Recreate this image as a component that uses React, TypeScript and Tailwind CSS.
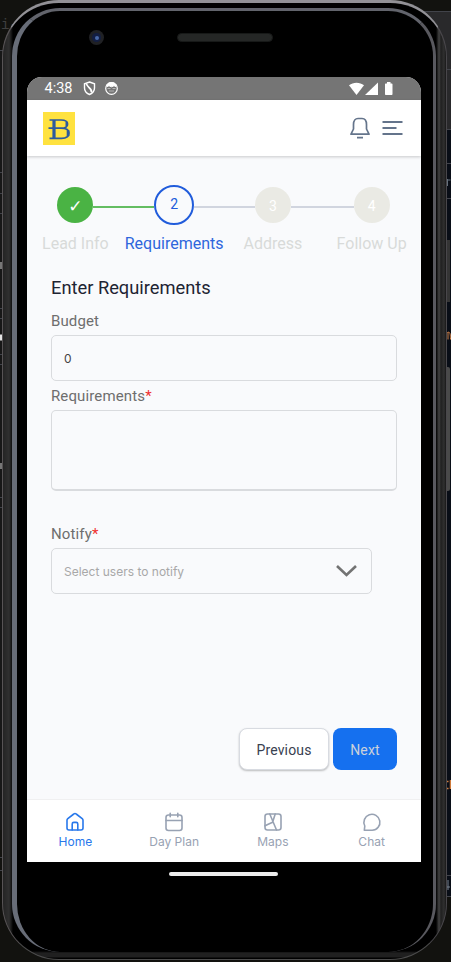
import React from "react";

const steps = [
  { label: "Lead Info", state: "done" },
  { label: "Requirements", state: "active" },
  { label: "Address", state: "todo" },
  { label: "Follow Up", state: "todo" },
];

function StatusBar() {
  return (
    <div className="flex h-[23px] shrink-0 items-center bg-[#757575] pr-[27px] pl-[17.500px] text-white">
      <span className="w-[38.500px] pt-[2px] text-[14.500px] leading-none">4:38</span>
      <svg width="13" height="15" viewBox="0 0 13 15" fill="none" stroke="currentColor" strokeWidth="1.4">
        <path d="M6.5 1 11.5 2.8V7c0 3-2 5.300-5 6.500C3.500 12.300 1.500 10 1.500 7V2.800Z" />
        <path d="M3.500 2.500C3 6 9.500 7 8.500 11.500" strokeWidth="1.800" />
      </svg>
      <svg className="ml-[8px]" width="15" height="15" viewBox="0 0 15 15" fill="none" stroke="currentColor">
        <circle cx="7.500" cy="7.500" r="5.800" strokeWidth="1.200" />
        <path d="M3 5.500V3.500C5 .8 10 .8 12 3.500V5.500L10 4.800 7.500 5.800 5 4.800Z" fill="currentColor" />
        <path d="M3.500 7.500H6.500M8.500 7.500H11.500M5 10H10" strokeWidth=".8" opacity=".6" />
      </svg>
      <svg className="ml-auto" width="45" height="16" viewBox="0 0 45 16" fill="currentColor">
        <path d="M0 4.200C4.200.8 10.800.8 15 4.200L7.500 14Z" />
        <path d="M16 14 29 1.500V14Z" />
        <path d="M36 3.500c0-.6.400-1 1-1h1V1h3.500v1.500H42.500c.6 0 1 .4 1 1V13c0 .6-.4 1-1 1H37c-.6 0-1-.4-1-1Z" />
      </svg>
    </div>
  );
}

function Header() {
  return (
    <header className="relative flex h-[56px] shrink-0 items-center bg-white pr-[18px] pl-4 text-[#64748b] shadow-[0_1px_3px_rgba(0,0,0,0.2)]">
      <svg width="32" height="33" viewBox="0 0 32 33">
        <rect width="32" height="33" fill="#ffe23f" />
        <g fill="none" stroke="#2d5a9e">
          <path d="M6.500 8H18C22.500 8 24.500 9.500 24.500 12s-2 4.200-6 4.200H5.500M18 16.200c5 0 8 1.300 8 4.800s-3 5.300-7.500 5.300H6.500" strokeWidth="1.700" />
          <path d="M11 8V26.300" strokeWidth="3.200" />
          <path d="M23.800 9.800V14M25 18.300V24" strokeWidth="2.600" />
        </g>
      </svg>
      <svg className="ml-auto" width="20" height="22" viewBox="0 0 20 22" fill="none" stroke="currentColor" strokeWidth="1.700" strokeLinejoin="round">
        <path d="M1 17.200 3.500 12V7.500C3.500 3.500 5.500 1.500 8 1.500h4c2.500 0 4.500 2 4.500 6V12L19 17.200Z" />
        <path d="M7 20.700H13" />
      </svg>
      <svg className="ml-3" width="21" height="18" viewBox="0 0 21 18" fill="none" stroke="currentColor" strokeWidth="1.900">
        <path d="M.5 3H20.500M.5 9H14.500M.5 15H20.500" />
      </svg>
    </header>
  );
}

function Stepper() {
  return (
    <div className="-ml-px grid h-[91px] w-[395px] grid-cols-4">
      {steps.map((step, i) => (
        <div key={step.label} className="flex flex-col items-center">
          <div className="flex h-10 w-full items-center">
            <div className={`mt-[3px] h-[2px] flex-1 ${i === 0 ? "bg-transparent" : i === 1 ? "bg-[#64bd62]" : "bg-[#d1d5df]"}`} />
            {step.state === "done" && (
              <div className="flex h-9 w-9 items-center justify-center rounded-full bg-[#4ab344] font-['DejaVu_Sans',sans-serif] text-[17px] text-white">
                <span className="mt-[3px]">✓</span>
              </div>
            )}
            {step.state === "active" && (
              <div className="flex h-10 w-10 items-center justify-center rounded-full border-2 border-[#215cdb] pb-[2px] text-[14px] text-[#215cdb]">
                {i + 1}
              </div>
            )}
            {step.state === "todo" && (
              <div className="flex h-9 w-9 items-center justify-center rounded-full bg-[#eaeae4] text-[14px] text-white">
                <span className="mt-[3px]">{i + 1}</span>
              </div>
            )}
            <div className={`mt-[3px] h-[2px] flex-1 ${i === 3 ? "bg-transparent" : i === 0 ? "bg-[#64bd62]" : "bg-[#d1d5df]"}`} />
          </div>
          <span className={`mt-[7px] text-[16px] leading-6 whitespace-nowrap ${step.state === "active" ? "text-[#2e66dc]" : "text-[#d8dad9]"}`}>
            {step.label}
          </span>
        </div>
      ))}
    </div>
  );
}

function Label({ children, required }: { children: string; required?: boolean }) {
  return (
    <label className="block h-5 text-[15px] leading-[21px] tracking-[0.13px] text-[#6e6e6e]">
      {children}
      {required && <span className="text-[#ef3030]">*</span>}
    </label>
  );
}

function Form() {
  return (
    <div className="flex flex-1 flex-col px-6">
      <h1 className="h-6 text-[18.300px] leading-6 text-[#1e2433]">Enter Requirements</h1>
      <div className="mt-[11px]">
        <Label>Budget</Label>
        <div className="mt-[4px] flex h-[46px] w-[346px] items-center rounded-[5px] border border-[#d9dbde] px-3 pt-px font-[Inter,sans-serif] text-[12px] text-[#444]">
          0
        </div>
      </div>
      <div className="mt-[5px]">
        <Label required>Requirements</Label>
        <div className="mt-[4px] h-[81px] w-[346px] rounded-[5px] border border-b-2 border-[#d9dbde]" />
      </div>
      <div className="mt-[33px]">
        <Label required>Notify</Label>
        <div className="mt-[4px] flex h-[46px] w-[321px] items-center justify-between rounded-[5px] border border-[#d9dbde] pr-[14px] pl-3 font-[Inter,sans-serif] text-[12px] text-[#a8a8a8]">
          <span className="pt-[2px]">Select users to notify</span>
          <svg width="21" height="12" viewBox="0 0 21 12" fill="none" stroke="#737373" strokeWidth="2.600">
            <path d="m1 1 9.500 9L20 1" />
          </svg>
        </div>
      </div>
      <div className="mt-auto mb-[29px] flex justify-end gap-1 text-[14px] tracking-[0.15px]">
        <button className="h-[42px] w-[90px] rounded-lg border border-[#d8dbe1] bg-white pt-[2px] text-[#394150] shadow-[0_1px_2px_rgba(0,0,0,0.25)]">Previous</button>
        <button className="h-[42px] w-[64px] rounded-lg bg-[#1570ef] pt-[2px] text-[#cbd1da]">Next</button>
      </div>
    </div>
  );
}

function NavIcon({ name }: { name: string }) {
  return (
    <svg width="20" height="20" viewBox="0 0 20 20" fill="none" stroke="currentColor" strokeWidth="1.600" strokeLinejoin="round" strokeLinecap="round">
      {name === "Home" && (
        <>
          <path d="M2 8.300c0-.6.300-1.200.8-1.600L8.800 2c.7-.6 1.700-.6 2.400 0l6 4.700c.5.400.8 1 .8 1.600V16c0 1.200-.8 2-2 2H4c-1.200 0-2-.8-2-2Z" />
          <path d="M7.200 18v-6c0-1 .6-1.600 1.600-1.600h2.400c1 0 1.600.6 1.600 1.600v6" />
        </>
      )}
      {name === "Day Plan" && (
        <>
          <rect x="2" y="3" width="16" height="15.500" rx="2.500" />
          <path d="M2 8.500H18M6.200 1.200V4.800M13.800 1.200V4.800" />
        </>
      )}
      {name === "Maps" && (
        <>
          <rect x="2" y="2" width="16" height="16" rx="2.500" />
          <path d="M6.800 2 13.500 18M2 13.800 9.600 10.200 12.200 2" />
        </>
      )}
      {name === "Chat" && <path d="M2.300 18.300 2.800 14A8 8 0 1 1 10.200 18.300Z" />}
    </svg>
  );
}

function BottomNav() {
  return (
    <nav className="-ml-px grid h-[63px] w-[395px] shrink-0 grid-cols-4 border-t border-[#f0f0f1] bg-white pt-3">
      {["Home", "Day Plan", "Maps", "Chat"].map((name) => (
        <div key={name} className={`flex flex-col items-center ${name === "Home" ? "text-[#2878eb]" : "text-[#98a2b3]"}`}>
          <NavIcon name={name} />
          <span className="mt-px font-[Inter,sans-serif] text-[12px] leading-[18px]">{name}</span>
        </div>
      ))}
    </nav>
  );
}

function Backdrop() {
  return (
    <svg className="absolute inset-0" width="451" height="962" viewBox="0 0 451 962">
      <rect width="451" height="962" fill="#12120f" />
      <rect y="50" width="20" height="780" fill="#171717" />
      <rect x="420" y="12" width="31" height="117" fill="#29292b" />
      <rect x="440" y="129" width="11" height="767" fill="#090e17" />
      <path d="M400 11.500H451M440 69.500H451M440 129.500H451M440 163.500H451M440 198.500H451M440 875.500H451M440 896.500H451M0 50.500H10M0 172.500H4M0 193.500H4M0 213.500H4M0 308.500H4M0 318.500H4M0 354.500H4M0 364.500H4M0 497.500H4M0 507.500H4M0 857.500H4M0 870.500H4" stroke="#41434a" />
      <path d="M0 262h2v7h-2zM0 463h2v6h-2z" fill="#777" />
      <path d="M0 334.500h2v6h-2z" fill="#e5e5e5" />
      <rect x="444" y="240" width="6" height="62" fill="#353535" />
      <rect x="444" y="367" width="6" height="124" rx="2" fill="#4a4a4a" />
      <path d="M447.500 186v-7M447.500 180h3" stroke="#65717c" />
      <path d="M448 339.500v-7.500M447.500 332.500c2-1 3 0 3 7" stroke="#cf8149" fill="none" />
      <path d="M447 781.500h1.500M447 788.500h1.500M450.500 780v9" stroke="#cf7a3b" strokeWidth="1.500" />
      <path d="M448 880v10M446 887h4" stroke="#7a8491" />
      <text x="1" y="29" fill="#3f3f3f" fontFamily="Liberation Mono, monospace" fontSize="14">i-</text>
    </svg>
  );
}

export default function App() {
  return (
    <div className="relative h-[962px] w-[451px] overflow-hidden bg-[#12120f] pl-[2px] font-[Roboto,sans-serif]">
      <Backdrop />
      <div className="relative h-[960px] w-[445px] rounded-[57px] border-t-[3px] border-r border-b border-l border-t-[#929196] border-r-[#49474b] border-b-[#4c4c4c] border-l-[#575355] bg-[linear-gradient(0deg,#000_0,#000_1px,#202020_2px,#202020_6px,transparent_8px),linear-gradient(90deg,#242424_0,#303030_6px,#1c1c1c_8px,#000_10px,#000_433px,#434343_436px,#202020_438px,#303030_441px,#171717_443px)] pt-[5px] pr-[10px] pb-[7px] pl-[9px]">
        <div className="h-full rounded-[48px] border-t-[3px] border-r-[3px] border-l-[5px] border-t-[#62646c] border-r-[#59595f] border-l-[#686d78] bg-black pr-[12px] pl-[10px]">
          <div className="flex h-[66px] items-start pt-[19px] pl-[62px]">
            <div className="flex h-[15px] w-[15px] items-center justify-center rounded-full bg-[#202124]">
              <div className="flex h-[9px] w-[9px] items-center justify-center rounded-full bg-[#131e42]">
                <div className="h-[4px] w-[4px] rounded-full bg-[#4968a7]" />
              </div>
            </div>
            <div className="mt-[3px] ml-[73px] h-[9px] w-[96px] rounded-full border border-[#171918] bg-[#252726]" />
          </div>
          <div className="flex h-[785px] w-[394px] flex-col overflow-hidden rounded-t-[15px] bg-[#f9fafc]">
            <StatusBar />
            <Header />
            <div className="flex min-h-0 flex-1 flex-col pt-[29px]">
              <Stepper />
              <Form />
            </div>
            <BottomNav />
          </div>
          <div className="mt-[10px] ml-[142px] h-[4px] w-[109px] rounded-full bg-[#ededed]" />
        </div>
      </div>
    </div>
  );
}
